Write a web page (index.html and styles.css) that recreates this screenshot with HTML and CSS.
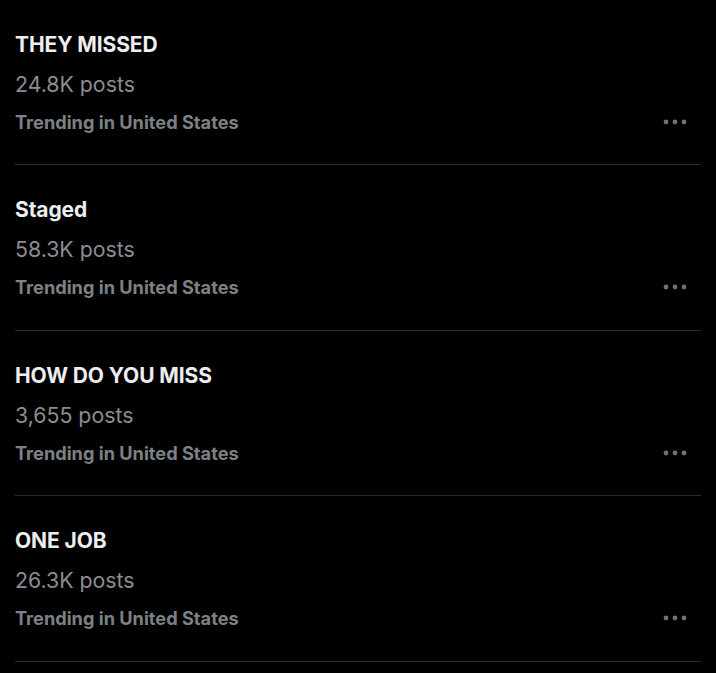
FILE: index.html
```html
<!DOCTYPE html>
<html>
<head>
<meta charset="utf-8">
<link rel="stylesheet" href="styles.css">
</head>
<body>
<div class="list">
  <div class="trend">
    <div class="title">THEY MISSED</div>
    <div class="count">24.8K posts</div>
    <div class="meta"><span>Trending in United States</span><svg class="more" width="24" height="6" viewBox="0 0 24 6"><circle cx="3" cy="3" r="2.4"/><circle cx="12" cy="3" r="2.4"/><circle cx="21" cy="3" r="2.4"/></svg></div>
  </div>
  <div class="trend">
    <div class="title">Staged</div>
    <div class="count">58.3K posts</div>
    <div class="meta"><span>Trending in United States</span><svg class="more" width="24" height="6" viewBox="0 0 24 6"><circle cx="3" cy="3" r="2.4"/><circle cx="12" cy="3" r="2.4"/><circle cx="21" cy="3" r="2.4"/></svg></div>
  </div>
  <div class="trend">
    <div class="title">HOW DO YOU MISS</div>
    <div class="count">3,655 posts</div>
    <div class="meta"><span>Trending in United States</span><svg class="more" width="24" height="6" viewBox="0 0 24 6"><circle cx="3" cy="3" r="2.4"/><circle cx="12" cy="3" r="2.4"/><circle cx="21" cy="3" r="2.4"/></svg></div>
  </div>
  <div class="trend">
    <div class="title">ONE JOB</div>
    <div class="count">26.3K posts</div>
    <div class="meta"><span>Trending in United States</span><svg class="more" width="24" height="6" viewBox="0 0 24 6"><circle cx="3" cy="3" r="2.4"/><circle cx="12" cy="3" r="2.4"/><circle cx="21" cy="3" r="2.4"/></svg></div>
  </div>
</div>
</body>
</html>
```

FILE: styles.css
```css
html, body {
  margin: 0;
  padding: 0;
  background: #000;
}
body {
  font-family: Inter, "Liberation Sans", sans-serif;
  width: 716px;
  height: 673px;
  overflow: hidden;
}
.list {
  padding-left: 15px;
  padding-right: 15px;
}
.trend {
  padding: 31px 0 30.4px;
  border-bottom: 1px solid #2c2c2c;
}
.title {
  color: #eceeef;
  font-size: 21px;
  font-weight: 700;
  line-height: 28px;
  letter-spacing: -0.1px;
}
.count {
  margin-top: 11px;
  color: #8b8d90;
  font-size: 21.3px;
  font-weight: 400;
  line-height: 28px;
}
.meta {
  margin-top: 12px;
  display: flex;
  align-items: center;
  justify-content: space-between;
  color: #7d8084;
  font-size: 18.2px;
  font-weight: 700;
  line-height: 24px;
  padding-right: 14px;
}
.more {
  fill: #6f7175;
}
```
